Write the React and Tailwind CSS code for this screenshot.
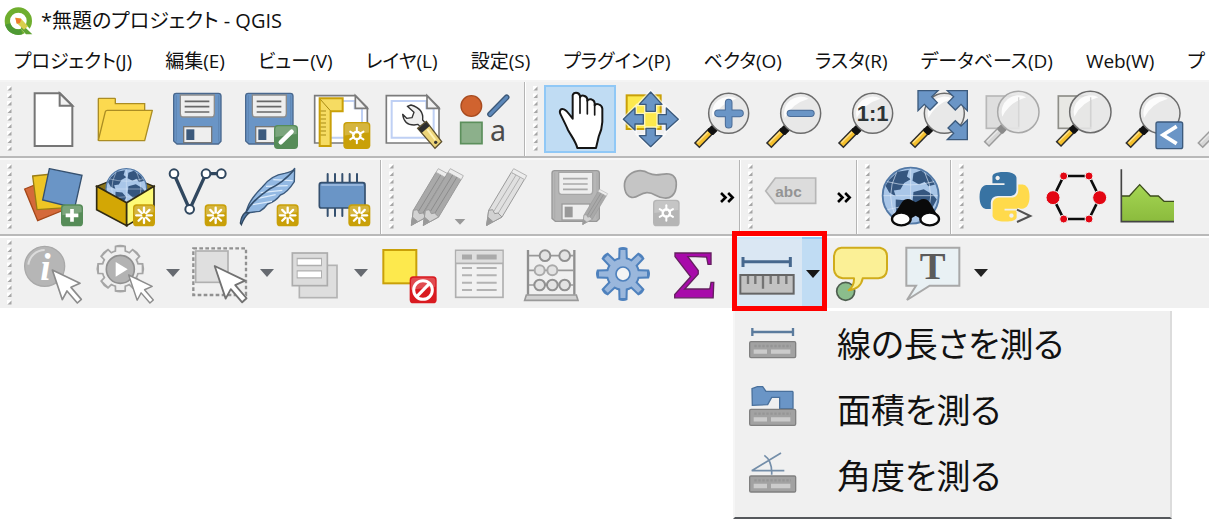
import React from "react";

const BLUE = "#6a95c6";
const NAVY = "#3c5a7c";
const GOLD = "#c9a008";

/* Every toolbar drawing uses three drawing units per pixel. */
function Pic({ x, y, children }) {
  return (
    <svg viewBox={`${x} ${y} 216 216`} className="size-[72px] shrink-0 overflow-visible" aria-hidden="true">
      {children}
    </svg>
  );
}

function Tool({ label, x, y = 9, children, active = false }) {
  return (
    <button
      type="button"
      aria-label={label}
      className={
        active
          ? "flex h-[68px] w-[72px] shrink-0 items-center justify-center border-2 border-[#90c8f6] bg-[#c0dcf3]"
          : "flex h-[72px] w-[72px] shrink-0 items-center justify-center"
      }
    >
      <Pic x={x} y={y}>{children}</Pic>
    </button>
  );
}

function Handle() {
  return (
    <div className="flex h-full w-[18px] shrink-0 items-center pl-[7px]">
      <svg viewBox="0 0 5 66" className="h-[66px] w-[5px]" aria-hidden="true">
        {[0, 1, 2, 3, 4, 5, 6, 7, 8].map((i) => (
          <g key={i}>
            <rect x="0" y={i * 7.5} width="4" height="4" fill="#fff" />
            <path d={`M4.500 ${i * 7.5 + 0.5}v4h-4z`} fill="#a6a6a6" />
          </g>
        ))}
      </svg>
    </div>
  );
}

function Separator() {
  return <div className="ml-[2px] w-[2px] shrink-0 self-stretch border-r border-white bg-[#b4b4b4]" />;
}

function Arrow({ label, color = "#666a70", className = "" }) {
  return (
    <button type="button" aria-label={label} className={`flex h-[72px] w-[22px] shrink-0 items-center justify-center ${className}`}>
      <svg viewBox="0 0 14 8" className="h-2 w-[14px]" aria-hidden="true">
        <path d="M0 0h14L7 8z" fill={color} />
      </svg>
    </button>
  );
}

function More({ label, className }) {
  return (
    <button type="button" aria-label={label} className={`flex h-[72px] shrink-0 items-center ${className}`}>
      <svg viewBox="0 0 46 34" className="h-[11px] w-[15px]" fill="none" stroke="#000" strokeWidth="8" aria-hidden="true">
        <path d="M3 3l14 14L3 31M25 3l14 14-14 14" />
      </svg>
    </button>
  );
}

function Badge({ x, y, size = 66, fill = GOLD, spokes = 8, children }) {
  const c = size / 2;
  const list = Array.from({ length: spokes }, (_, i) => i);
  return (
    <g transform={`translate(${x} ${y})`}>
      <rect width={size} height={size} rx="11" fill={fill} />
      <path d={`M4 ${c}V13q0-9 9-9h${size - 26}q9 0 9 9v${c - 22}z`} fill="#fff" opacity=".22" />
      {children || (
        <g stroke="#fff" strokeWidth={spokes === 8 ? 7 : 6} strokeLinecap="round">
          {list.map((i) => (
            <path key={i} d={`M${c} ${c - (spokes === 8 ? 9 : 10)}V${c - 23}`} transform={`rotate(${(i * 360) / spokes} ${c} ${c})`} />
          ))}
          {spokes !== 8 && <circle cx={c} cy={c} r="11" fill="none" strokeWidth="7" />}
        </g>
      )}
    </g>
  );
}

function Lens({ x, y, r = 60, gray = false, under, children }) {
  return (
    <g transform={`translate(${x} ${y})`}>
      {under}
      <path d="M-96 97L-52 52" stroke={gray ? "#9c9c9c" : "#2c2c2c"} strokeWidth="23" />
      <path d="M-93 94L-58 58" stroke={gray ? "#d6d6d6" : "#f5c02c"} strokeWidth="14" />
      <path d="M-94 88L-62 56" stroke={gray ? "#e8e8e8" : "#fde08a"} strokeWidth="4" />
      <path d="M-58 50l10-10 10 10-10 10z" stroke={gray ? "#8a8a8a" : "#111"} strokeWidth="10" strokeLinejoin="round" fill={gray ? "#8a8a8a" : "#111"} />
      <circle r={r} fill="#e6e6e6" fillOpacity=".88" stroke={gray ? "#a8a8a8" : "#6c6c6c"} strokeWidth="4.500" />
      <path d="M-48 14A50 50 0 0 1 24-44Q-26-30-48 14z" fill="#fff" opacity=".85" />
      {children}
    </g>
  );
}

function Floppy({ x, y, gray = false }) {
  const edge = gray ? "#989898" : "#49688e";
  return (
    <g transform={`translate(${x} ${y})`}>
      <path d="M10 2H136q8 0 8 8v136l-8 8H12l-10-9V10q0-8 8-8z" fill={gray ? "#b6b6b6" : BLUE} stroke={edge} strokeWidth="4" />
      <path d="M10 8v138M137 8v138" stroke={edge} strokeWidth="2" opacity=".5" />
      <path d="M22 7h102v56q0 10-8 10H30q-8 0-8-10z" fill="#eee" stroke={gray ? "#a6a6a6" : "#8c8c8c"} strokeWidth="4" />
      <path d="M35 26h74M35 42h74M35 58h74" stroke={gray ? "#a9a9a9" : "#686868"} strokeWidth="5" />
      <rect x="32" y="102" width="84" height="48" fill="#eee" stroke={gray ? "#9c9c9c" : "#777"} strokeWidth="4" />
      <rect x="40" y="110" width="24" height="32" fill={gray ? "#999" : NAVY} />
    </g>
  );
}

function Sheet({ x, y }) {
  return (
    <g transform={`translate(${x} ${y})`}>
      <path d="M2 2h122l36 36v106H2z" fill="#fff" stroke="#7b7b7b" strokeWidth="5" />
      <path d="M18 18h104v22h22v88H18z" fill="none" stroke="#bfd0f4" strokeWidth="6" />
      <path d="M124 2v38h36z" fill="#f2f2f2" stroke="#7b7b7b" strokeWidth="5" />
    </g>
  );
}

function Pencil({ x, y, dark = false }) {
  return (
    <g transform={`translate(${x} ${y})`} stroke="#9a9a9a" strokeWidth="3" strokeLinejoin="round">
      <path d="M8 128L76 14l40 20L48 148 2 173z" fill={dark ? "#a9a9a9" : "#e0e0e0"} />
      <path d="M8 128l12-2 6 12 10-2 12 12-46 25z" fill="#d2d2d2" />
      <path d="M76 14l7-11 39 21-6 12z" fill="#ededed" stroke="#b5b5b5" />
      <path d="M24 130L90 22M37 136l66-108" fill="none" stroke={dark ? "#8c8c8c" : "#b0b0b0"} />
      <path d="M2 173l4-24 14 12z" fill="#999" />
    </g>
  );
}

function Cursor({ x, y, s = 1, stroke = "#8c8c8c" }) {
  return (
    <path
      transform={`translate(${x} ${y}) scale(${s})`}
      d="M0 0l83 40-27 12 31 36-12 11-31-36-14 26z"
      fill="#fff"
      stroke={stroke}
      strokeWidth="5"
      strokeLinejoin="round"
    />
  );
}

function Gear({ cx, cy, teeth = 8, r, len, w, fill, stroke, sw = 5 }) {
  const list = Array.from({ length: teeth }, (_, i) => i);
  return (
    <g transform={`translate(${cx} ${cy})`}>
      <g fill={stroke}>
        <circle r={r + sw / 2} />
        {list.map((i) => (
          <path key={i} transform={`rotate(${(i * 360) / teeth})`} d={`M${-w / 2 - sw / 2} 0L${-w / 2 - 1} ${-len}Q0 ${-len - sw} ${w / 2 + 1} ${-len}L${w / 2 + sw / 2} 0z`} />
        ))}
      </g>
      <g fill={fill}>
        <circle r={r - sw / 2} />
        {list.map((i) => (
          <path key={i} transform={`rotate(${(i * 360) / teeth})`} d={`M${-w / 2 + sw / 2} 0L${-w / 2 + sw - 1} ${-len + sw}H${w / 2 - sw + 1}L${w / 2 - sw / 2} 0z`} />
        ))}
      </g>
    </g>
  );
}

function Globe({ cx, cy, r }) {
  return (
    <g transform={`translate(${cx} ${cy}) scale(${r / 60})`}>
      <circle r="60" fill="#a9c6e8" stroke="#5379a6" strokeWidth="4" />
      <path d="M-46-34l18-17 24-4-4 14 8 6-14 8-8 14-14 2 4 12-14-8-8-14zM6-48l16-6 20 14 10 16-14 4-8-10-12 6-14-8zM-32 8l20 2 12 14-10 18-6 16-12-10-4-22zM6-8l22-6 20 12 8 10-12 22-18 16-8-22-14-12z" fill="#35567f" />
      <path d="M-58 0H58M0-58V58M-50-30q50 14 100 0M-50 30q50-14 100 0M-30-50q-26 50 0 100M30-50q26 50 0 100" fill="none" stroke="#dbe8f7" strokeWidth="2" opacity=".7" />
    </g>
  );
}

function SmallRuler({ y }) {
  return (
    <g>
      <rect x="90" y={y} width="138" height="48" rx="4" fill="#a2a2a2" stroke="#808080" strokeWidth="4" />
      <path d={`M104 ${y + 13}h110`} stroke="#959595" strokeWidth="7" strokeDasharray="7 5" />
      <path d={`M102 ${y + 30}h40M154 ${y + 30}h58`} stroke="#cbcbcb" strokeWidth="13" />
    </g>
  );
}

const menus = ["プロジェクト(J)", "編集(E)", "ビュー(V)", "レイヤ(L)", "設定(S)", "プラグイン(P)", "ベクタ(O)", "ラスタ(R)", "データベース(D)", "Web(W)", "プ"];

function TitleBar() {
  return (
    <header className="flex h-10 items-center gap-2 pl-[3px] pt-[2px]">
      <svg viewBox="9 15 90 90" className="size-[30px] shrink-0" aria-hidden="true">
        <circle cx="55" cy="60" r="33" fill="none" stroke="#6fae2e" strokeWidth="16" />
        <path d="M23 69A33 33 0 0 0 65 92" fill="none" stroke="#4e9934" strokeWidth="16" />
        <path d="M46 51l20 6 35 40-5 6H80L52 70z" fill="#fff" />
        <path d="M68 72l29 28H78L62 82z" fill="#5fa233" />
        <path d="M46 50l16 2 22 24-12 10-22-20z" fill="#d9cf4c" />
        <path d="M46 50l18 4-4 12-10 2z" fill="#ee7a2c" />
      </svg>
      <h1 className="whitespace-nowrap text-[20px] leading-8 text-[#111]">*無題のプロジェクト - QGIS</h1>
    </header>
  );
}

function MenuBar() {
  return (
    <nav className="flex h-[42px] items-center gap-[33px] overflow-hidden border-b-2 border-[#f4f4f4] pl-[14px] pt-[2px]">
      {menus.map((name, i) => (
        <button key={i} type="button" className="shrink-0 whitespace-nowrap text-[19px] leading-8 text-[#111]">
          {name}
        </button>
      ))}
    </nav>
  );
}

function ProjectBar() {
  return (
    <div role="toolbar" aria-label="Project and navigation" className="flex h-[76px] items-center overflow-hidden border-b-2 border-[#b9b9b9] bg-[#f0f0f0]">
      <Handle />
      <Tool label="New project" x={54}>
        <path d="M104 40h76l37 37v121H104z" fill="#fff" stroke="#757575" strokeWidth="6" />
        <path d="M179 40v37h38z" fill="#f2f2f2" stroke="#757575" strokeWidth="6" />
      </Tool>
      <Tool label="Open project" x={270}>
        <path d="M295 181V57q0-2 2-2h47q2 0 2 2v14h88v24" fill="#fcd94f" stroke="#ab8d23" strokeWidth="4" />
        <path d="M295 181l21-86q1-4 6-4h135l-23 91H298z" fill="#fddb50" stroke="#ab8d23" strokeWidth="4" strokeLinejoin="round" />
      </Tool>
      <Tool label="Save project" x={486}>
        <Floppy x={519} y={38} />
      </Tool>
      <Tool label="Save project as" x={702}>
        <Floppy x={735} y={38} />
        <Badge x={822} y={135} size={72} fill="#568c58">
          <path d="M20 52L53 20" stroke="#fff" strokeWidth="13" strokeLinecap="round" />
        </Badge>
      </Tool>
      <Tool label="New print layout" x={18}>
        <Sheet x={42} y={45} />
        <path d="M59 55h69v39H92v104H59z" fill="#f6dc62" stroke={GOLD} strokeWidth="6" />
        <path d="M62 93h16M62 105h16M62 117h16M62 129h16M62 141h16M62 153h16M62 165h16M61 58l30 34" stroke="#a88b14" strokeWidth="3" />
        <Badge x={130} y={126} size={81} spokes={6} />
      </Tool>
      <Tool label="Layout manager" x={234}>
        <Sheet x={257} y={45} />
        <path d="M308 103q4 32 34 32l12-2 13 14 13-13-12-14q4-34-35-45l-11 4 20 18-6 16-16 2z" fill="#efefef" stroke="#333" strokeWidth="4" strokeLinejoin="round" />
        <path d="M353 145l26-21 46 61-20 20z" fill="#ecd479" stroke="#5d502e" strokeWidth="4" />
        <path d="M354 146l25-21 10 13-24 21z" fill="#2e2e2e" />
        <circle cx="407" cy="187" r="5" fill="#333" />
        <path d="M382 148l24 32" stroke="#fff3b5" strokeWidth="6" />
      </Tool>
      <Tool label="Style manager" x={450}>
        <circle cx="514" cy="78" r="31" fill="#d0632f" stroke="#a84b1f" strokeWidth="4" />
        <path d="M570 103l50-51" stroke="#3c5878" strokeWidth="17" strokeLinecap="round" />
        <path d="M570 103l50-51" stroke="#5d88b9" strokeWidth="9" strokeLinecap="round" />
        <rect x="482" y="127" width="64" height="64" fill="#8cb08b" stroke="#5c8f5c" strokeWidth="5" />
        <text x="570" y="184" fontFamily="Noto Sans" fontSize="86" fill="#4b4b4b">a</text>
      </Tool>
      <Separator />
      <Handle />
      <Tool label="Pan map" x={732} active>
        <path
          d="M832 204C828 186 814 168 804 150C798 136 790 120 782 104C776 92 782 85 792 88C802 92 808 104 818 116V46Q820 38 828 38Q838 38 840 48V52Q842 46 851 47Q861 49 862 58V62Q866 56 874 58Q884 61 884 70V76Q888 70 896 73Q906 76 907 86V126Q906 148 896 170L888 204Z"
          fill="#fff"
          stroke="#151515"
          strokeWidth="6"
          strokeLinejoin="round"
        />
        <path d="M840 50V100M862 60V102M884 74V105" stroke="#151515" strokeWidth="5" strokeLinecap="round" />
      </Tool>
      <Tool label="Pan map to selection" x={48}>
        <rect x="80" y="46" width="102" height="101" fill="#fde94d" stroke={GOLD} strokeWidth="6" />
        <path d="M152 36l34 37h-20v21h-28V73h-20zM152 200l34-33h-20v-22h-28v22h-20zM70 118l35-34v20h25v28h-25v18zM235 118l-36-34v20h-24v28h24v18z" fill="none" stroke="#fff" strokeWidth="12" opacity=".6" />
        <path d="M152 36l34 37h-20v21h-28V73h-20zM152 200l34-33h-20v-22h-28v22h-20zM70 118l35-34v20h25v28h-25v18zM235 118l-36-34v20h-24v28h24v18z" fill={BLUE} stroke={NAVY} strokeWidth="4" strokeLinejoin="round" />
      </Tool>
      <Tool label="Zoom in" x={264}>
        <Lens x={386} y={100}>
          <path d="M-32 0H34M0-32V34" stroke="#4b6c97" strokeWidth="23" strokeLinecap="round" />
          <path d="M-32 0H34M0-32V34" stroke={BLUE} strokeWidth="17" strokeLinecap="round" />
        </Lens>
      </Tool>
      <Tool label="Zoom out" x={480}>
        <Lens x={602} y={100}>
          <path d="M-31 0H31" stroke="#4b6c97" strokeWidth="22" strokeLinecap="round" />
          <path d="M-31 0H31" stroke={BLUE} strokeWidth="16" strokeLinecap="round" />
        </Lens>
      </Tool>
      <Tool label="Zoom to native resolution" x={696}>
        <Lens x={818} y={100}>
          <text y="24" textAnchor="middle" fontFamily="Liberation Sans" fontWeight="700" fontSize="66" fill="#2d3436">1:1</text>
        </Lens>
      </Tool>
      <Tool label="Zoom full" x={12}>
        <Lens x={133} y={100} />
        <path d="M54 32h60l-19 18 17 18-22 22-17-17-19 19zM202 32v60l-19-19-17 17-22-22 17-18-19-18zM202 179h-60l19-19-17-16 22-22 17 16 19-18z" fill={BLUE} stroke={NAVY} strokeWidth="4" />
      </Tool>
      <Tool label="Zoom to selection" x={228}>
        <Lens x={355} y={96} r={62} gray under={<rect x="-96" y="-48" width="97" height="97" fill="#dedede" stroke="#b8b8b8" strokeWidth="5" />} />
        <path d="M356 52v88" stroke="#d6d6d6" strokeWidth="4" />
      </Tool>
      <Tool label="Zoom to layer" x={444}>
        <Lens x={571} y={96} r={62} under={<rect x="-96" y="-48" width="97" height="97" fill="#e8e8e4" stroke="#8e8e88" strokeWidth="5" />} />
        <path d="M572 52v88" stroke="#d2d2d2" strokeWidth="4" />
      </Tool>
      <Tool label="Zoom last" x={660}>
        <Lens x={780} y={100} />
        <rect x="768" y="126" width="80" height="80" rx="6" fill={BLUE} stroke={NAVY} strokeWidth="4" />
        <path d="M830 139l-41 26 41 26" fill="none" stroke="#fff" strokeWidth="11" />
      </Tool>
      <Tool label="Zoom next" x={876}>
        <Lens x={996} y={100} gray />
      </Tool>
    </div>
  );
}

function LayerBar() {
  const y = 9;
  return (
    <div role="toolbar" aria-label="Layers and editing" className="flex h-[78px] items-center overflow-hidden border-t-2 border-b-2 border-t-[#f8f8f8] border-b-[#b9b9b9] bg-[#f0f0f0]">
      <Handle />
      <Tool label="Data source manager" x={54} y={y}>
        <path d="M74 93l85-34 40 94-86 35z" fill="#d4693a" stroke="#a44718" strokeWidth="4" />
        <path d="M98 54l80-8 12 104-79 5z" fill="#edc525" stroke="#987b16" strokeWidth="4" />
        <path d="M148 32l98 20-22 98-96-24z" fill={BLUE} stroke="#35506f" strokeWidth="4" />
        <Badge x={183} y={139} fill="#568c58">
          <path d="M14 33h38M33 14v38" stroke="#fff" strokeWidth="11" />
        </Badge>
      </Tool>
      <Tool label="New GeoPackage layer" x={270} y={y}>
        <path d="M290 85l30-12h112l30 12-82 48z" fill="#8b7419" stroke="#2e2914" strokeWidth="4" />
        <Globe cx={379} cy={93} r={61} />
        <path d="M290 85l90 49v69l-90-48z" fill="#d3a705" stroke="#302a12" strokeWidth="5" />
        <path d="M462 85l-82 49v69l82-48z" fill="#fdfa78" stroke="#302a12" strokeWidth="5" />
        <Badge x={399} y={139} />
      </Tool>
      <Tool label="New shapefile layer" x={486} y={y}>
        <path d="M522 48l47 106 49-107h45" fill="none" stroke="#30475f" strokeWidth="10" />
        <g fill="#fff" stroke="#30475f" strokeWidth="6">
          <circle cx="522" cy="47" r="13" />
          <circle cx="569" cy="154" r="13" />
          <circle cx="618" cy="47" r="13" />
          <circle cx="664" cy="47" r="13" />
        </g>
        <Badge x={614} y={139} />
      </Tool>
      <Tool label="New SpatiaLite layer" x={702} y={y}>
        <path d="M884 31q-5 11-30 15-40 5-67 41-35 35-44 61l-6 17q18-2 42-5 15-9 24-22 23-7 38-27 20-5 42-40z" fill="#93b9e3" stroke={NAVY} strokeWidth="4" strokeLinejoin="round" />
        <path d="M758 140l58-10M771 122l56-12M782 104l65-7M798 85l65-2M820 65l58 3" stroke="#dcebfb" strokeWidth="4" />
        <path d="M882 36q-33 38-75 58-52 34-70 71" fill="none" stroke="#34506f" strokeWidth="5" />
        <path d="M724 200l-3-5q3-22 14-31l12 1q-14 12-23 35z" fill="#537ba8" stroke="#30475f" strokeWidth="4" />
        <Badge x={830} y={139} />
      </Tool>
      <Tool label="New temporary layer" x={918} y={y}>
        <path d="M983 48v24M1005 48v24M1027 48v24M1049 48v24M1071 48v24M983 150v24M1005 150v24M1027 150v24" stroke="#35506f" strokeWidth="6" strokeLinecap="round" />
        <rect x="958" y="74" width="137" height="76" rx="7" fill={BLUE} stroke="#35506f" strokeWidth="5" />
        <path d="M964 81h125" stroke="#a4c1e3" strokeWidth="5" />
        <Badge x={1045} y={139} />
      </Tool>
      <Separator />
      <Handle />
      <Tool label="Current edits" x={90} y={y}>
        <Pencil x={122} y={29} dark />
        <Pencil x={158} y={29} dark />
        <path d="M254 183h32l-16 17z" fill="#999" />
      </Tool>
      <Tool label="Toggle editing" x={306} y={y}>
        <Pencil x={348} y={29} />
      </Tool>
      <Tool label="Save layer edits" x={522} y={y}>
        <Floppy x={544} y={36} gray />
        <g transform="translate(637 92) scale(.62)">
          <Pencil x={0} y={0} dark />
        </g>
      </Tool>
      <Tool label="Add polygon" x={738} y={y}>
        <path d="M785 118c-22-4-28-40-14-60 18-24 48-24 66-12 24 12 40-2 60 2 22 4 24 22 21 42-3 22-18 32-35 30-22 0-30-16-50-16-22-2-30 18-48 14z" fill="#c5c5c5" stroke="#979797" strokeWidth="5" />
        <Badge x={849} y={125} size={80} fill="#b5b5b5" spokes={6} />
      </Tool>
      <More label="More editing tools" className="w-[49px] justify-end pr-[2px]" />
      <Separator />
      <Handle />
      <Tool label="Layer labeling" x={57} y={y}>
        <path d="M77 99l29-39h121v76H106z" fill="#dcdcdc" stroke="#b6b6b6" strokeWidth="5" />
        <text x="106" y="116" fontFamily="Liberation Sans" fontWeight="700" fontSize="46" fill="#949494">abc</text>
      </Tool>
      <More label="More label tools" className="w-[23px] justify-end pr-[2px]" />
      <Separator />
      <Handle />
      <Tool label="Search catalog" x={408} y={y}>
        <Globe cx={512} cy={113} r={84} />
        <path d="M456 179l30-46q9-13 24-9l17 9 17-9q15-5 25 9l28 46-30 18-40-24-41 24z" fill="#0a0a0a" />
        <ellipse cx="484" cy="183" rx="28" ry="19" fill="#fff" stroke="#0a0a0a" strokeWidth="7" />
        <ellipse cx="569" cy="183" rx="28" ry="19" fill="#fff" stroke="#0a0a0a" strokeWidth="7" />
      </Tool>
      <Separator />
      <Handle />
      <Tool label="Python console" x={690} y={y}>
        <g transform="translate(719 42) scale(6.200)">
          <path fill="#3873a3" d="M14.25.18l.9.2.73.26.59.3.45.32.34.34.25.34.16.33.1.3.04.26.02.2-.01.13V8.500l-.05.63-.13.55-.21.46-.26.38-.3.31-.33.25-.35.19-.35.14-.33.1-.3.07-.26.04-.21.02H8.770l-.69.05-.59.14-.5.22-.41.27-.33.32-.27.35-.2.36-.15.37-.1.35-.07.32-.04.27-.02.21v3.060H3.170l-.21-.03-.28-.07-.32-.12-.35-.18-.36-.26-.36-.36-.35-.46-.32-.59-.28-.73-.21-.88-.14-1.050-.05-1.230.06-1.220.16-1.040.24-.87.32-.71.36-.57.4-.44.42-.33.42-.24.4-.16.36-.1.32-.05.24-.01h.16l.06.01h8.160v-.83H6.180l-.01-2.750-.02-.37.05-.34.11-.31.17-.28.25-.26.31-.23.38-.2.44-.18.51-.15.58-.12.64-.1.71-.06.77-.04.84-.02 1.270.05zm-6.300 1.980l-.23.33-.08.41.08.41.23.34.33.22.41.09.41-.09.33-.22.23-.34.08-.41-.08-.41-.23-.33-.33-.22-.41-.09-.41.09z" />
          <path fill="#ffda4b" d="M21.100 6.110l.28.06.32.12.35.18.36.27.36.35.35.47.32.59.28.73.21.88.14 1.040.05 1.230-.06 1.230-.16 1.040-.24.86-.32.71-.36.57-.4.45-.42.33-.42.24-.4.16-.36.09-.32.05-.24.02-.16-.01h-8.220v.82h5.840l.01 2.760.02.36-.05.34-.11.31-.17.29-.25.25-.31.24-.38.2-.44.17-.51.15-.58.13-.64.09-.71.07-.77.04-.84.01-1.270-.04-1.070-.14-.9-.2-.73-.25-.59-.3-.45-.33-.34-.34-.25-.34-.16-.33-.1-.3-.04-.25-.02-.2.01-.13v-5.340l.05-.64.13-.54.21-.46.26-.38.3-.32.33-.24.35-.2.35-.14.33-.1.3-.06.26-.04.21-.02.13-.01h5.840l.69-.05.59-.14.5-.21.41-.28.33-.32.27-.35.2-.36.15-.36.1-.35.07-.32.04-.28.02-.21V6.070h2.090l.14.01zm-6.470 14.250l-.23.33-.08.41.08.41.23.33.33.23.41.08.41-.08.33-.23.23-.33.08-.41-.08-.41-.23-.33-.33-.23-.41-.08-.41.08z" />
        </g>
        <path d="M831 155l40 19-40 18" fill="none" stroke="#efefef" strokeWidth="13" />
        <path d="M831 155l40 19-40 18" fill="none" stroke="#505050" strokeWidth="6" />
      </Tool>
      <Tool label="Topology checker" x={906} y={y}>
        <path d="M971 54h76l32 65-32 64h-76l-32-64z" fill="none" stroke="#0c0c0c" strokeWidth="8" />
        <g fill="#e30613" stroke="#f0f0f0" strokeWidth="3">
          <circle cx="971" cy="54" r="12" />
          <circle cx="1047" cy="54" r="12" />
          <circle cx="971" cy="183" r="12" />
          <circle cx="1047" cy="183" r="12" />
          <circle cx="939" cy="119" r="21" />
          <circle cx="1079" cy="119" r="21" />
        </g>
      </Tool>
      <Tool label="Profile" x={1122} y={y}>
        <defs>
          <linearGradient id="terrain" x1="0" y1="0" x2="0" y2="1">
            <stop offset="0" stopColor="#a5d653" />
            <stop offset="1" stopColor="#8bbb3d" />
          </linearGradient>
        </defs>
        <path d="M1146 114h22l31-34 32 34h24l17 16h30v60h-156z" fill="url(#terrain)" />
        <path d="M1146 114h22l31-34 32 34h24l17 16h30" fill="none" stroke="#3c4c1c" strokeWidth="4" />
        <path d="M1144 34v157h158" fill="none" stroke="#444" strokeWidth="5" />
      </Tool>
    </div>
  );
}

const measureItems = [
  {
    name: "線の長さを測る",
    top: 48,
    art: (
      <>
        <path d="M98 84h122M98 72v24M220 72v24" stroke="#5b7b9d" strokeWidth="7" />
        <SmallRuler y={113} />
      </>
    ),
  },
  {
    name: "面積を測る",
    top: 242,
    art: (
      <>
        <path d="M97 250l16-6h16l10 14h79l2 2v50h-40v-34h-24l-12 22-46 2z" fill={BLUE} stroke="#49709c" strokeWidth="4" />
        <SmallRuler y={312} />
      </>
    ),
  },
  {
    name: "角度を測る",
    top: 440,
    art: (
      <>
        <path d="M96 496h98M96 496l88-53M134 450q24 16 22 58" fill="none" stroke="#748ea9" strokeWidth="5" />
        <SmallRuler y={512} />
      </>
    ),
  },
];

function MeasureControl() {
  return (
    <div className="relative flex h-[72px] shrink-0">
      <button type="button" aria-label="Measure" className="w-[70px] overflow-hidden border-t-2 border-[#cde6fa] bg-[#dae7f3]">
        <svg viewBox="36 39 210 210" className="size-[70px]" aria-hidden="true">
          <path d="M68 107h144M69 93v30M211 93v30" stroke="#46688e" strokeWidth="9" />
          <rect x="61" y="147" width="160" height="56" fill="#c2c2c2" stroke="#666" strokeWidth="6" />
          <path d="M84 150v24M106 150v24M129 150v38M152 150v24M175 150v24M199 150v24" stroke="#747474" strokeWidth="7" />
        </svg>
      </button>
      <Arrow label="Choose measure tool" color="#161616" className="border-t-2 border-[#90c8f6] bg-[#c0dcf3]" />
      <div className="w-[2px]" />
      <div className="pointer-events-none absolute -top-[6px] left-0 h-20 w-[95px] border-[5px] border-[#ff0000]" />
      <ul className="absolute left-px top-[74px] w-[439px] border-b-2 border-l-2 border-r-2 border-b-[#55585c] border-l-[#f6f6f6] border-r-[#dcdcdc] bg-[#f0f0f0] pb-2">
        {measureItems.map((item) => (
          <li key={item.name}>
            <button type="button" className="flex h-[66px] w-full items-center gap-10 pl-[14px] text-left">
              <svg viewBox={`88 ${item.top} 144 144`} className="size-12 shrink-0 overflow-visible" aria-hidden="true">
                {item.art}
              </svg>
              <span className="whitespace-nowrap text-[34px] leading-[48px] text-[#111]">{item.name}</span>
            </button>
          </li>
        ))}
      </ul>
    </div>
  );
}

function AttributeBar() {
  const y = 9;
  return (
    <div role="toolbar" aria-label="Attributes" className="flex h-[72px] items-center border-t-2 border-[#fdfdfd] bg-[#f0f0f0]">
      <Handle />
      <Tool label="Identify features" x={54} y={y}>
        <circle cx="134" cy="97" r="60" fill="#b6b6b6" stroke="#a9a9a9" strokeWidth="4" />
        <path d="M85 92A50 50 0 0 1 134 48" fill="none" stroke="#dcdcdc" strokeWidth="6" />
        <text x="136" y="138" textAnchor="middle" fontFamily="Liberation Serif" fontStyle="italic" fontWeight="700" fontSize="112" fill="#fff">i</text>
        <Cursor x={157} y={108} />
      </Tool>
      <Tool label="Run feature action" x={270} y={y}>
        <Gear cx={361} cy={104} r={55} len={69} w={32} fill="#efefef" stroke="#a5a5a5" />
        <circle cx="361" cy="106" r="42" fill="#b3b3b3" stroke="#909090" strokeWidth="5" />
        <path d="M347 84l36 22-36 22z" fill="#fff" />
        <Cursor x={386} y={123} s={0.85} />
      </Tool>
      <Arrow label="Actions menu" />
      <Tool label="Select features" x={552} y={y}>
        <rect x="580" y="43" width="158" height="140" fill="none" stroke="#919191" strokeWidth="7" strokeDasharray="11 7" />
        <rect x="587" y="51" width="97" height="94" fill="#dfdfdf" stroke="#b0b0b0" strokeWidth="5" />
        <Cursor x={644} y={96} s={1.1} stroke="#727272" />
      </Tool>
      <Arrow label="Selection menu" />
      <Tool label="Select by value" x={834} y={y}>
        <rect x="898" y="94" width="113" height="97" fill="#dedede" stroke="#b3b3b3" strokeWidth="5" />
        <rect x="877" y="57" width="105" height="98" fill="#dcdcdc" stroke="#acacac" strokeWidth="5" />
        <path d="M890 84h76M890 121h76" stroke="#afafaf" strokeWidth="25" />
        <path d="M893 84h70M893 121h70" stroke="#fff" strokeWidth="17" />
      </Tool>
      <Arrow label="Select by value menu" />
      <Tool label="Deselect features" x={6} y={y}>
        <rect x="40" y="48" width="99" height="100" fill="#fde94d" stroke={GOLD} strokeWidth="6" />
        <Badge x={119} y={127} size={81} fill="#d91a20">
          <circle cx="40" cy="41" r="28" fill="none" stroke="#fff" strokeWidth="9" />
          <path d="M22 60L59 22" stroke="#fff" strokeWidth="9" />
        </Badge>
      </Tool>
      <Tool label="Attribute table" x={222} y={y}>
        <rect x="257" y="49" width="142" height="141" fill="#f1f1f1" stroke="#afafaf" strokeWidth="5" />
        <path d="M259 69h138" stroke="#dedede" strokeWidth="35" />
        <path d="M257 88h142" stroke="#afafaf" strokeWidth="5" />
        <path d="M276 69h30M320 69h60" stroke="#aaa" strokeWidth="15" />
        <path d="M276 102h30M320 102h60M276 124h30M320 124h60M276 146h30M320 146h60M276 168h30M320 168h60" stroke="#b3b3b3" strokeWidth="6" />
      </Tool>
      <Tool label="Field calculator" x={438} y={y}>
        <path d="M474 48v134M613 48v134" stroke="#8f8f8f" strokeWidth="7" />
        <path d="M477 65h134M477 109h134M477 153h134" stroke="#999" strokeWidth="5" />
        <g fill="#e3e3e3" stroke="#919191" strokeWidth="6">
          <circle cx="525" cy="65" r="16" /><circle cx="584" cy="65" r="16" />
          <circle cx="509" cy="109" r="15" stroke="#aaa" /><circle cx="547" cy="109" r="15" stroke="#aaa" />
          <circle cx="509" cy="153" r="16" /><circle cx="547" cy="153" r="16" /><circle cx="584" cy="153" r="16" />
          <path d="M469 183h150l5 16H464z" fill="#d1d1d1" stroke="#999" strokeWidth="5" />
        </g>
      </Tool>
      <Tool label="Processing toolbox" x={654} y={y}>
        <Gear cx={759} cy={120} r={48} len={78} w={25} fill="#9ab7dc" stroke="#4e81bd" sw={6} />
        <circle cx="759" cy="120" r="21" fill="#f4f4f4" stroke="#4e81bd" strokeWidth="5" />
      </Tool>
      <Tool label="Statistical summary" x={870} y={y}>
        <text x="974" y="189" textAnchor="middle" fontFamily="Liberation Serif" fontWeight="700" fontSize="204" fill="#a80aaa" stroke="#64205f" strokeWidth="4">Σ</text>
      </Tool>
      <MeasureControl />
      <Tool label="Map tips" x={318} y={33}>
        <circle cx="377" cy="196" r="27" fill="#8bbd8c" stroke="#4e5e4f" strokeWidth="5" />
        <path d="M364 65h116q21 4 21 26v40q-2 24-26 26h-47q-5 31-42 36 17-14 16-36h-34q-24-4-26-26V91q2-24 22-26z" fill="#fbf096" stroke="#d0ac1b" strokeWidth="6" strokeLinejoin="round" />
      </Tool>
      <Tool label="Text annotation" x={534} y={33}>
        <path d="M559 65h159v114h-89l-68 43 27-43h-29z" fill="#e9f1f4" stroke="#a8a8a8" strokeWidth="6" />
        <text x="638" y="159" textAnchor="middle" fontFamily="Liberation Serif" fontWeight="700" fontSize="116" fill="#5b5b5b">T</text>
      </Tool>
      <Arrow label="Annotation menu" color="#222" />
    </div>
  );
}

export default function App() {
  return (
    <main lang="ja" className="min-h-screen w-full bg-white font-['Open_Sans','Noto_Sans_CJK_JP',sans-serif] [font-feature-settings:'palt']">
      <TitleBar />
      <MenuBar />
      <ProjectBar />
      <LayerBar />
      <AttributeBar />
    </main>
  );
}
